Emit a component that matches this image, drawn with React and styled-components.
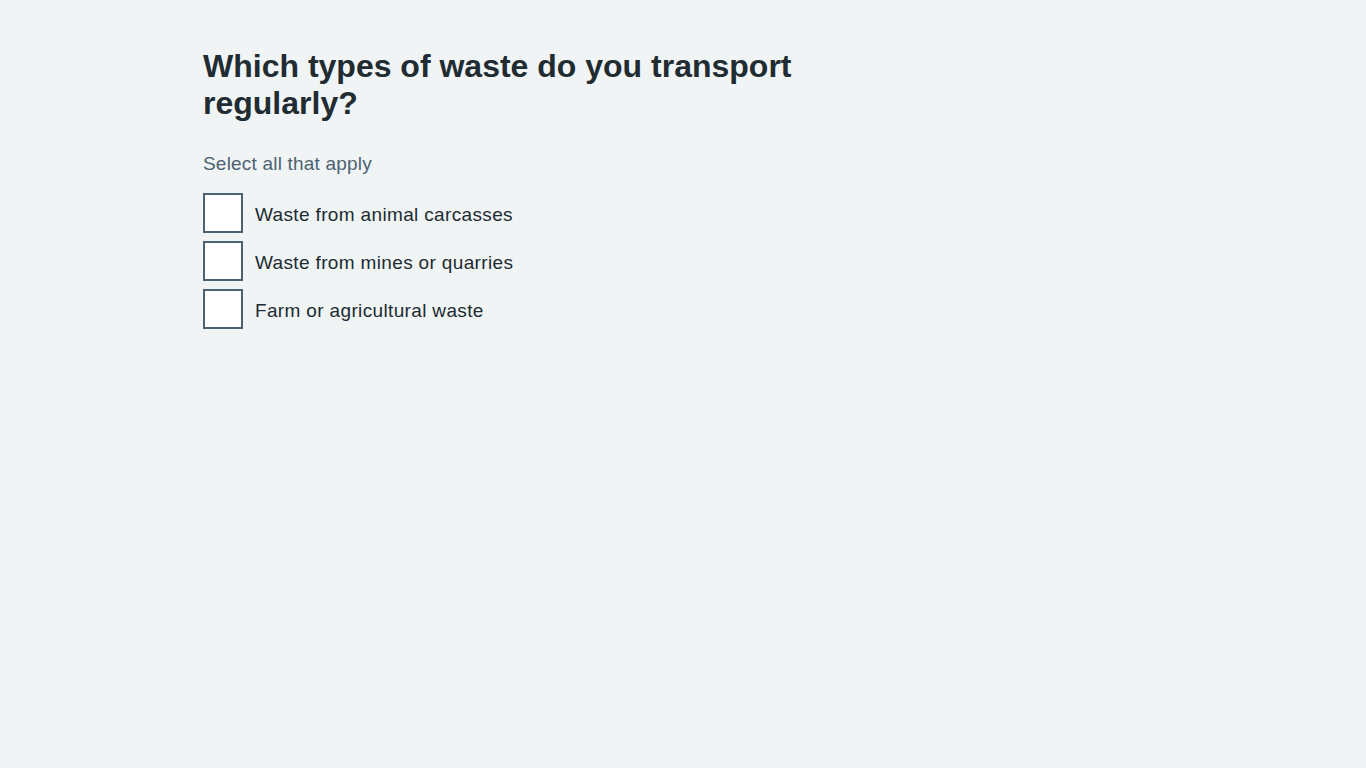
import React from 'react';
import styled, { createGlobalStyle } from 'styled-components';

const GlobalStyle = createGlobalStyle`
  html, body {
    margin: 0;
    padding: 0;
    background: #f0f4f5;
  }
  body {
    font-family: "Liberation Sans", Arial, sans-serif;
    color: #212b32;
    -webkit-font-smoothing: antialiased;
  }
`;

const Page = styled.main`
  max-width: 960px;
  margin: 0 auto;
  padding-top: 48px;
`;

const Fieldset = styled.fieldset`
  border: 0;
  margin: 0;
  padding: 0;
  min-width: 0;
`;

const Legend = styled.legend`
  padding: 0;
  margin: 0 0 28px;
  max-width: 620px;
  h1 {
    margin: 0;
    font-size: 32px;
    line-height: 37px;
    font-weight: 700;
    color: #212b32;
  }
`;

const Hint = styled.div`
  font-size: 19px;
  line-height: 28px;
  letter-spacing: 0.2px;
  color: #4c6272;
  margin-bottom: 15px;
`;

const Options = styled.div`
  display: flex;
  flex-direction: column;
  gap: 8px;
`;

const Option = styled.label`
  display: flex;
  align-items: center;
  gap: 12px;
  cursor: pointer;
  font-size: 19px;
  line-height: 28px;
  color: #212b32;
`;

const LabelText = styled.span`
  padding-top: 3px;
  letter-spacing: 0.35px;
`;

const Box = styled.input.attrs({ type: 'checkbox' })`
  appearance: none;
  margin: 0;
  width: 40px;
  height: 40px;
  box-sizing: border-box;
  border: 2px solid #4c6272;
  background: #ffffff;
  flex-shrink: 0;
  cursor: pointer;
`;

const options = [
  'Waste from animal carcasses',
  'Waste from mines or quarries',
  'Farm or agricultural waste',
];

const App = () => (
  <>
    <GlobalStyle />
    <Page>
      <Fieldset>
        <Legend>
          <h1>Which types of waste do you transport regularly?</h1>
        </Legend>
        <Hint>Select all that apply</Hint>
        <Options>
          {options.map((text) => (
            <Option key={text}>
              <Box name="waste" value={text} />
              <LabelText>{text}</LabelText>
            </Option>
          ))}
        </Options>
      </Fieldset>
    </Page>
  </>
);

export default App;
